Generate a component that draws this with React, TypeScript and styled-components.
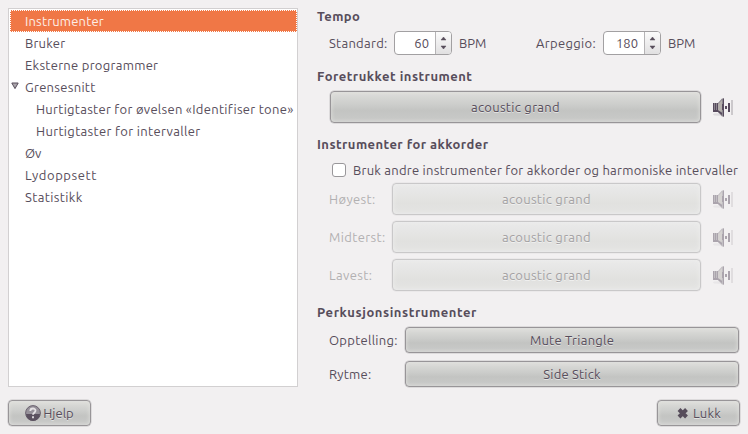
import React from "react";
import styled, { createGlobalStyle, css } from "styled-components";

const GlobalStyle = createGlobalStyle`
  * { box-sizing: border-box; }
  body {
    margin: 0;
    background: #f2f0f1;
    color: #574d5b;
    font: 13px/22px "Ubuntu", "Noto Sans", sans-serif;
    overflow: hidden;
  }
  button, input { font: inherit; color: inherit; }
`;

const Text = styled.span<{ $track?: number }>`
  white-space: pre;
  letter-spacing: ${(p) => p.$track ?? 0}px;
`;

const Dialog = styled.main`
  width: 748px;
  height: 434px;
  padding: 8px;
  display: flex;
  flex-direction: column;
`;

const Content = styled.div`
  display: flex;
  height: 379px;
`;

const CategoryList = styled.ul`
  list-style: none;
  width: 290px;
  height: 379px;
  margin: 0;
  padding: 1px 0 0 1px;
  background: #fff;
  border: 1px solid #d2d0d1;
`;

const Category = styled.li<{ $level: number; $selected?: boolean }>`
  height: 22px;
  display: flex;
  align-items: center;
  padding-left: ${(p) => (p.$level ? 26 : 1)}px;
  ${(p) =>
    p.$selected &&
    css`
      padding-left: 0;
      background: #f07746;
      color: #fdeee6;
      border: 1px dotted #fff;
    `}
`;

const Expander = styled.span`
  width: 14px;
  height: 22px;
  flex: none;
  svg { display: block; margin-top: 6px; }
`;

const Settings = styled.section`
  flex: 1;
  padding-left: 19px;
`;

const Heading = styled.h2<{ $top: number; $track: number }>`
  margin: ${(p) => p.$top}px 0 0;
  height: 22px;
  font-size: 13px;
  font-weight: 700;
  line-height: 22px;
  white-space: nowrap;
  letter-spacing: ${(p) => p.$track}px;
`;

const Row = styled.div<{ $top: number; $height: number }>`
  display: flex;
  align-items: center;
  margin-top: ${(p) => p.$top}px;
  margin-left: 12px;
  height: ${(p) => p.$height}px;
`;

const Label = styled.label<{ $width: number; $disabled?: boolean }>`
  width: ${(p) => p.$width}px;
  flex: none;
  color: ${(p) => (p.$disabled ? "#b2b0b2" : "inherit")};
`;

const Spin = styled.div`
  display: flex;
  width: 58px;
  height: 24px;
  flex: none;
  margin-right: 7px;
  border: 1px solid #a2a0a2;
  border-radius: 4px;
  background: #fff;
  overflow: hidden;
`;

const SpinValue = styled.div`
  width: 41px;
  padding-right: 6px;
  text-align: right;
  border-right: 1px solid #b5b3b5;
`;

const SpinArrows = styled.div`
  flex: 1;
  background: linear-gradient(#fbfbfb, #e1e0e1);
  svg { display: block; }
`;

const Button = styled.button<{ $width: number; $height: number; $disabled?: boolean }>`
  display: flex;
  align-items: center;
  justify-content: center;
  width: ${(p) => p.$width}px;
  height: ${(p) => p.$height}px;
  flex: none;
  padding: 0;
  border-radius: 4px;
  text-shadow: 0 1px 0 rgba(255, 255, 255, 0.55);
  ${(p) =>
    p.$disabled
      ? css`
          color: #a3a1a3;
          border: 1px solid #c9c8c9;
          background: linear-gradient(#eaeaea, #e1e1df 65%, #e4e4e3);
          box-shadow: inset 0 0 5px #eeeeed, 0 0 0 0.5px #e3e2e3;
        `
      : css`
          border: 1px solid #989598;
          background: linear-gradient(#dededb, #cdcecc 40%, #c3c4c2 62%, #c9cac9);
          box-shadow: inset 0 0 4px #e2e2df, 0 0 0 0.5px #c8c6c8;
        `}
`;

const IconSlot = styled.span<{ $disabled?: boolean }>`
  margin-left: 11px;
  height: 22px;
  opacity: ${(p) => (p.$disabled ? 0.45 : 1)};
  svg { display: block; }
`;

const Checkbox = styled.span`
  width: 14px;
  height: 14px;
  margin: 0 7px 0 3px;
  flex: none;
  border: 1px solid #99979a;
  border-radius: 3px;
  background: #fff;
`;

const Actions = styled.footer`
  display: flex;
  justify-content: space-between;
  margin-top: 13px;
  svg { flex: none; }
`;

const Speaker = ({ disabled }: { disabled?: boolean }) => (
  <IconSlot $disabled={disabled}>
    <svg width="22" height="22" viewBox="0 0 22 22">
      <ellipse cx="6.5" cy="18.5" rx="5.5" ry="1.2" fill="#dedbde" />
      <path d="M1 7h5l4-4.5h2v18h-2L6 16H1z" fill="#8a858d" />
      <path d="M6 8l4-4v12l-4-1z" fill="#b3aeab" />
      <path d="M1 7h1v9H1zM3 7h1v8H3zM5 7h1v8H5zM11 2.5h1v18h-1zM10 8h1v6h-1zM2 14h4l4 3v2l-4-3H2z" fill="#574a5d" />
      <path d="M13 10h2v3h-2zM16 7h2v9h-2z" fill="#574a5d" />
      <path d="M19 4h2v15h-2z" fill="#cbc8cb" />
    </svg>
  </IconSlot>
);

const SpinBox = ({ value }: { value: string }) => (
  <Spin>
    <SpinValue><Text>{value}</Text></SpinValue>
    <SpinArrows>
      <svg width="15" height="22" viewBox="0 0 15 22">
        <path d="M5 8L7.5 5 10 8zM5 14L7.5 17 10 14z" fill="#574d5b" stroke="#574d5b" strokeWidth=".5" />
      </svg>
    </SpinArrows>
  </Spin>
);

const categories = [
  { name: "Instrumenter", level: 0, track: 0.17, selected: true },
  { name: "Bruker", level: 0, track: 0.2 },
  { name: "Eksterne programmer", level: 0, track: 0.28 },
  { name: "Grensesnitt", level: 0, track: 0.3, expanded: true },
  { name: "Hurtigtaster for øvelsen «Identifiser tone»", level: 1, track: 0.28 },
  { name: "Hurtigtaster for intervaller", level: 1, track: 0.33 },
  { name: "Øv", level: 0, track: 0 },
  { name: "Lydoppsett", level: 0, track: 0.57 },
  { name: "Statistikk", level: 0, track: 0.38 },
];

const voices = ["Høyest:", "Midterst:", "Lavest:"];

export default function App() {
  return (
    <>
      <GlobalStyle />
      <Dialog>
        <Content>
          <CategoryList>
            {categories.map((c) => (
              <Category key={c.name} $level={c.level} $selected={c.selected}>
                {c.level === 0 && (
                  <Expander>
                    {c.expanded && (
                      <svg width="8" height="8" viewBox="0 0 8 8">
                        <path d="M.8 1h6.4L4 6.6z" fill="#aaa5ab" stroke="#574d5b" />
                      </svg>
                    )}
                  </Expander>
                )}
                <Text $track={c.track}>{c.name}</Text>
              </Category>
            ))}
          </CategoryList>

          <Settings>
            <Heading $top={-3} $track={0.4}>Tempo</Heading>
            <Row $top={4} $height={24}>
              <Label $width={65}><Text $track={0.28}>Standard:</Text></Label>
              <SpinBox value="60" />
              <Label $width={77}><Text>BPM</Text></Label>
              <Label $width={67}><Text $track={0.32}>Arpeggio:</Text></Label>
              <SpinBox value="180" />
              <Text>BPM</Text>
            </Row>

            <Heading $top={10} $track={0.5}>Foretrukket instrument</Heading>
            <Row $top={4} $height={32}>
              <Label $width={1} />
              <Button $width={371} $height={32}><Text $track={0.3}>acoustic grand</Text></Button>
              <Speaker />
            </Row>

            <Heading $top={10} $track={0.45}>Instrumenter for akkorder</Heading>
            <Row $top={4} $height={22}>
              <Checkbox />
              <Text $track={0.24}>Bruk andre instrumenter for akkorder og harmoniske intervaller</Text>
            </Row>
            {voices.map((name, i) => (
              <Row key={name} $top={i ? 6 : 2} $height={32}>
                <Label $width={63} $disabled><Text $track={0.38}>{name}</Text></Label>
                <Button $width={309} $height={32} $disabled><Text $track={0.3}>acoustic grand</Text></Button>
                <Speaker disabled />
              </Row>
            ))}

            <Heading $top={10} $track={0.57}>Perkusjonsinstrumenter</Heading>
            <Row $top={4} $height={26}>
              <Label $width={76}><Text $track={0.28}>Opptelling:</Text></Label>
              <Button $width={334} $height={26}><Text $track={0.25}>Mute Triangle</Text></Button>
            </Row>
            <Row $top={8} $height={26}>
              <Label $width={76}><Text $track={0.2}>Rytme:</Text></Label>
              <Button $width={334} $height={26}><Text $track={0.2}>Side Stick</Text></Button>
            </Row>
          </Settings>
        </Content>

        <Actions>
          <Button $width={83} $height={26}>
            <svg width="18" height="18" viewBox="0 0 18 18">
              <circle cx="8" cy="9" r="7.4" fill="#96919a" stroke="#6c6370" />
              <path d="M1 10h14a7 7 0 0 1-14 0z" fill="#5b5160" />
              <path d="M5.3 7c0-3.4 5.4-3.2 5.2-.2C10.4 8.8 8 8.6 8 10.8M8 12.3v2" fill="none" stroke="#e5e2e5" strokeWidth="1.8" />
            </svg>
            <Text>Hjelp</Text>
          </Button>
          <Button $width={83} $height={26}>
            <svg width="17" height="14" viewBox="0 0 17 14">
              <path d="M3 3.5L10.5 11M10.5 3.5L3 11" stroke="#574d5b" strokeWidth="4" />
            </svg>
            <Text $track={0.2}>Lukk</Text>
          </Button>
        </Actions>
      </Dialog>
    </>
  );
}
